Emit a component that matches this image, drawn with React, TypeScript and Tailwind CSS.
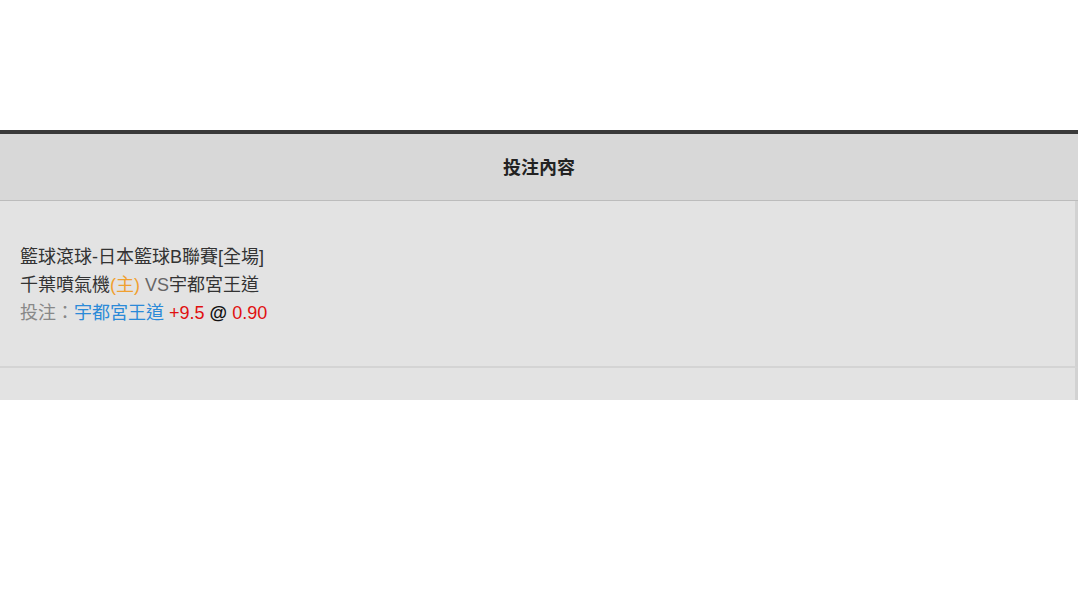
export default function App() {
  const font = { fontFamily: '"Liberation Sans", Arial, "Noto Sans CJK TC", sans-serif' };
  return (
    <div className="w-[1080px] h-[600px] bg-white" style={font}>
      <div className="h-[130px]" />
      <div className="w-[1078px]">
        <div className="border-t-[4px] border-[#3a3a3a] bg-[#d8d8d8] h-[71px] border-b border-b-[#bcbcbc] flex items-center justify-center pt-[3px]">
          <span className="text-[18px] font-bold text-[#222]">投注內容</span>
        </div>
        <div className="bg-[#e3e3e3] h-[167px] border-r-[3px] border-[#d2d2d2] border-b-2 border-b-[#d4d4d4] flex flex-col justify-center pl-5 pt-[2px] text-[18px] leading-[28px] text-[#333]">
          <div>籃球滾球-日本籃球B聯賽[全場]</div>
          <div>
            千葉噴氣機<span className="text-[#f0a030]">(主)</span>
            <span className="text-[#666]"> VS</span>宇都宮王道
          </div>
          <div className="text-[#888]">
            投注：<span className="text-[#2b8ad8]">宇都宮王道</span>{' '}
            <span className="text-[#e01010]">+9.5</span>{' '}
            <span className="text-[#111] font-bold">@</span>{' '}
            <span className="text-[#e01010]">0.90</span>
          </div>
        </div>
        <div className="bg-[#e3e3e3] h-[32px] border-r-[3px] border-[#d2d2d2]" />
      </div>
    </div>
  );
}
